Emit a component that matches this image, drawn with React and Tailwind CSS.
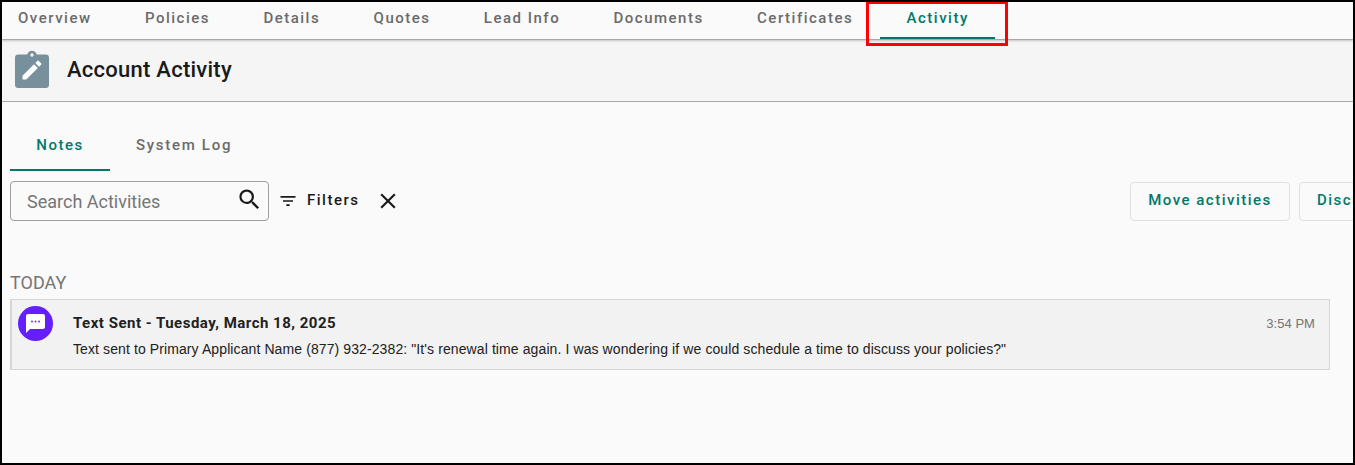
import React from 'react';
import { MdSearch, MdClose, MdFilterList } from 'react-icons/md';

const TABS = ['Overview', 'Policies', 'Details', 'Quotes', 'Lead Info', 'Documents', 'Certificates', 'Activity'];

function ClipboardPencil() {
  return (
    <svg width="34" height="38" viewBox="0 0 34 38" className="-mt-[3px] shrink-0">
      <path
        d="M3 4.500h9.200C12.900 2.200 14.800.8 17 .8s4.100 1.400 4.800 3.700H31c1.700 0 3 1.300 3 3V35c0 1.700-1.300 3-3 3H3c-1.700 0-3-1.300-3-3V7.500c0-1.700 1.300-3 3-3z"
        fill="#78909c"
      />
      <circle cx="17" cy="5" r="1.700" fill="#f5f5f5" />
      <path d="M7.500 29.500v-3.800L19 14.200l3.800 3.800L11.300 29.500z" fill="#fff" />
      <path d="M20.300 12.900l2-2c.4-.4 1-.4 1.400 0l2.400 2.400c.4.4.4 1 0 1.400l-2 2z" fill="#fff" />
    </svg>
  );
}

function MessageBadge() {
  return (
    <div className="flex h-[35px] w-[35px] shrink-0 items-center justify-center rounded-full bg-[#651fff]">
      <svg width="21" height="21" viewBox="0 0 21 21">
        <path d="M3 1h15c1.100 0 2 .9 2 2v11c0 1.100-.9 2-2 2H5l-4 4V3c0-1.100.9-2 2-2z" fill="#fff" />
        <circle cx="7" cy="8.500" r=".9" fill="#651fff" />
        <circle cx="10.500" cy="8.500" r=".9" fill="#651fff" />
        <circle cx="14" cy="8.500" r=".9" fill="#651fff" />
      </svg>
    </div>
  );
}

export default function App() {
  return (
    <div className="relative h-[465px] w-[1355px] overflow-hidden border-2 border-black bg-[#fafafa] font-['Roboto',sans-serif]">
      {/* Top tabs */}
      <div className="relative flex h-[38px] border-b border-[#a8a8a8] shadow-[0_1px_2px_rgba(0,0,0,0.2)]">
        {TABS.map((tab, i) => {
          const on = tab === 'Activity';
          return (
            <div
              key={tab}
              className={[
                'relative flex h-full items-start pt-[5px] text-[15px] font-medium tracking-[1.5px]',
                i === 0 ? 'pl-4 pr-[26.700px]' : 'px-[26.700px]',
                on ? 'border-b-2 border-[#00796b] text-[#00796b]' : 'text-[#6b6b6b]',
              ].join(' ')}
            >
              {tab}
            </div>
          );
        })}
      </div>

      {/* Section header */}
      <div className="flex h-[62px] items-center gap-[18px] border-b border-[#a8a8a8] bg-[#f5f5f5] pl-[13px]">
        <ClipboardPencil />
        <h1 className="-mt-[2px] text-[22px] font-medium tracking-[0.25px] text-[#1a1a1a]">Account Activity</h1>
      </div>

      {/* Notes / System Log */}
      <div className="mt-[1px] flex h-[68px] pl-2">
        <div className="flex h-full w-[100px] items-center justify-center border-b-2 border-[#00796b] pt-[18px] text-[15px] font-medium tracking-[1.5px] text-[#00796b]">
          Notes
        </div>
        <div className="flex h-full items-center pl-[26px] pt-[17px] text-[15px] font-medium tracking-[1.7px] text-[#6b6b6b]">
          System Log
        </div>
      </div>

      {/* Search and actions */}
      <div className="mt-[10px] flex h-[40px] items-center pl-2">
        <div className="flex w-[1120px] shrink-0 items-center">
          <div className="flex h-[40px] w-[259px] items-center justify-between rounded-[4px] border border-[#9e9e9e] pl-4 pr-[5px]">
            <span className="text-[18px] text-[#757575]">Search Activities</span>
            <MdSearch size={27} className="-mt-[3px] text-[#1a1a1a]" />
          </div>
          <MdFilterList size={20} className="ml-[9px] text-[#1a1a1a]" />
          <span className="-mt-[2px] ml-[9px] text-[15px] font-medium tracking-[1.5px] text-[#1a1a1a]">Filters</span>
          <MdClose size={26} className="ml-[16px] text-[#1a1a1a]" />
        </div>
        <div className="flex shrink-0 gap-[9px]">
          <button className="h-[39px] w-[160px] rounded-[4px] border border-[#e0e0e0] pb-[2px] text-[15px] font-medium tracking-[1.5px] text-[#00796b]">
            Move activities
          </button>
          <button className="h-[39px] w-[160px] shrink-0 whitespace-nowrap rounded-[4px] border border-[#e0e0e0] pb-[2px] pl-[17px] text-left text-[15px] font-medium tracking-[1.5px] text-[#00796b]">
            Discuss
          </button>
        </div>
      </div>

      {/* Today */}
      <div className="mt-[52px] pl-2 text-[18px] leading-[20px] text-[#757575]">TODAY</div>
      <div className="ml-2 mt-[6px] flex h-[71px] w-[1320px] border border-l-2 border-[#d6d6d6] bg-[#f2f2f2] pl-[6px] pr-[14px] pt-[6px]">
        <MessageBadge />
        <div className="ml-5 flex-1">
          <div className="mt-[9px] text-[15px] font-bold leading-[17px] tracking-[0.5px] text-[#212121]">Text Sent - Tuesday, March 18, 2025</div>
          <div className="mt-[9px] font-['Liberation_Sans',sans-serif] text-[14px] leading-[16px] tracking-[0.1px] text-[#212121]">
            Text sent to Primary Applicant Name (877) 932-2382: "It's renewal time again. I was wondering if we could schedule a time to discuss your policies?"
          </div>
        </div>
        <span className="mt-[10px] font-['Liberation_Sans',sans-serif] text-[13px] leading-[15px] tracking-[0.05px] text-[#757575]">3:54 PM</span>
      </div>

      {/* Red annotation around the Activity tab */}
      <div className="absolute left-[864px] top-[-1px] h-[45px] w-[142px] border-[3px] border-[#ff0000]" />
    </div>
  );
}
